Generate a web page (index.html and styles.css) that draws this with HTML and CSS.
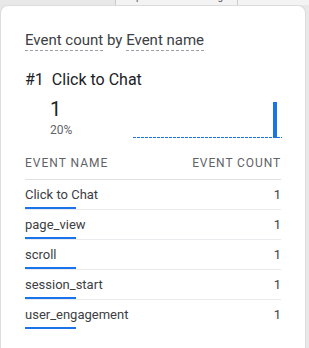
FILE: index.html
```html
<!DOCTYPE html>
<html lang="en">
<head>
    <meta charset="UTF-8">
    <meta name="viewport" content="width=device-width, initial-scale=1.0">
    <title>Event count by Event name</title>
    <link rel="stylesheet" href="styles.css">
</head>
<body>
    <div class="map-credits">
        <span class="credit">Map data ©2023 Google</span>
        <span class="credit">Terms of Use</span>
    </div>

    <div class="card">
        <h2 class="card-title">
            <span class="dim">Event count</span> by <span class="dim">Event name</span>
        </h2>

        <div class="top-item">
            <span class="rank">#1</span>
            <span class="top-name">Click to Chat</span>
        </div>

        <div class="summary">
            <div class="summary-value">
                <div class="big-number">1</div>
                <div class="percent">20%</div>
            </div>
            <svg class="spark" width="149" height="40" viewBox="0 0 149 40">
                <line x1="0" y1="39.5" x2="149" y2="39.5" stroke="#1a73e8" stroke-width="1" stroke-dasharray="3 1"/>
                <rect x="140" y="4" width="4" height="36" fill="#1a73e8"/>
            </svg>
        </div>

        <table class="events">
            <thead>
                <tr>
                    <th>Event name</th>
                    <th class="num">Event count</th>
                </tr>
            </thead>
            <tbody>
                <tr><td><span class="label">Click to Chat</span><div class="bar"></div></td><td class="num">1</td></tr>
                <tr><td><span class="label">page_view</span><div class="bar"></div></td><td class="num">1</td></tr>
                <tr><td><span class="label">scroll</span><div class="bar"></div></td><td class="num">1</td></tr>
                <tr><td><span class="label">session_start</span><div class="bar"></div></td><td class="num">1</td></tr>
                <tr><td><span class="label">user_engagement</span><div class="bar"></div></td><td class="num">1</td></tr>
            </tbody>
        </table>
    </div>
</body>
</html>
```

FILE: styles.css
```css
body {
    margin: 0;
    height: 348px;
    background: #e8e8e8;
    font-family: Roboto, "Liberation Sans", sans-serif;
    color: #3c4043;
    overflow: hidden;
}
.map-credits {
    height: 5px;
    overflow: hidden;
    display: flex;
    justify-content: flex-end;
    padding-left: 131px;
}
.credit {
    font-size: 10px;
    line-height: 12px;
    margin-top: -9px;
    padding: 0 6px;
    background: #f3f3f3;
    color: #555;
    white-space: nowrap;
    border-left: 1px solid #ccc;
}
.card {
    box-sizing: border-box;
    width: 306px;
    height: 343px;
    background: white;
    border: 1px solid #dadce0;
    border-bottom: none;
    border-radius: 8px 8px 0 0;
    padding: 24px 24px 0 24px;
}
.card-title {
    margin: 0;
    font-size: 15px;
    font-weight: 400;
    line-height: 20px;
    color: #3c4043;
}
.dim {
    border-bottom: 1px dashed #9aa0a6;
    padding-bottom: 1px;
}
.top-item {
    margin-top: 20px;
    font-size: 16px;
    line-height: 20px;
    color: #202124;
    display: flex;
    gap: 8px;
}
.summary {
    display: flex;
    justify-content: space-between;
    align-items: flex-end;
    margin-top: 7px;
    padding-left: 25px;
}
.big-number {
    font-size: 20px;
    line-height: 24px;
    color: #202124;
}
.percent {
    font-size: 12px;
    line-height: 14px;
    color: #5f6368;
    margin: 2px 0 1px 0;
}
.spark {
    display: block;
    margin-right: -1px;
}
.events {
    width: 100%;
    border-collapse: collapse;
    margin-top: 18px;
}
.events th {
    font-size: 12px;
    line-height: 15px;
    font-weight: 400;
    text-transform: uppercase;
    letter-spacing: 1px;
    color: #5f6368;
    text-align: left;
    padding: 0 0 8px 0;
    border-bottom: 1px solid #e0e0e0;
}
.events th.num {
    text-align: right;
    letter-spacing: 0.9px;
}
.events td {
    font-size: 13px;
    line-height: 16px;
    color: #3c4043;
    padding: 7px 0 0 0;
    vertical-align: top;
    border-bottom: 1px solid #e8eaed;
}
.events tbody tr:last-child td {
    border-bottom: none;
}
.events .num {
    text-align: right;
}
.bar {
    width: 51px;
    height: 2px;
    margin-top: 4px;
    background: #1a73e8;
}
```
